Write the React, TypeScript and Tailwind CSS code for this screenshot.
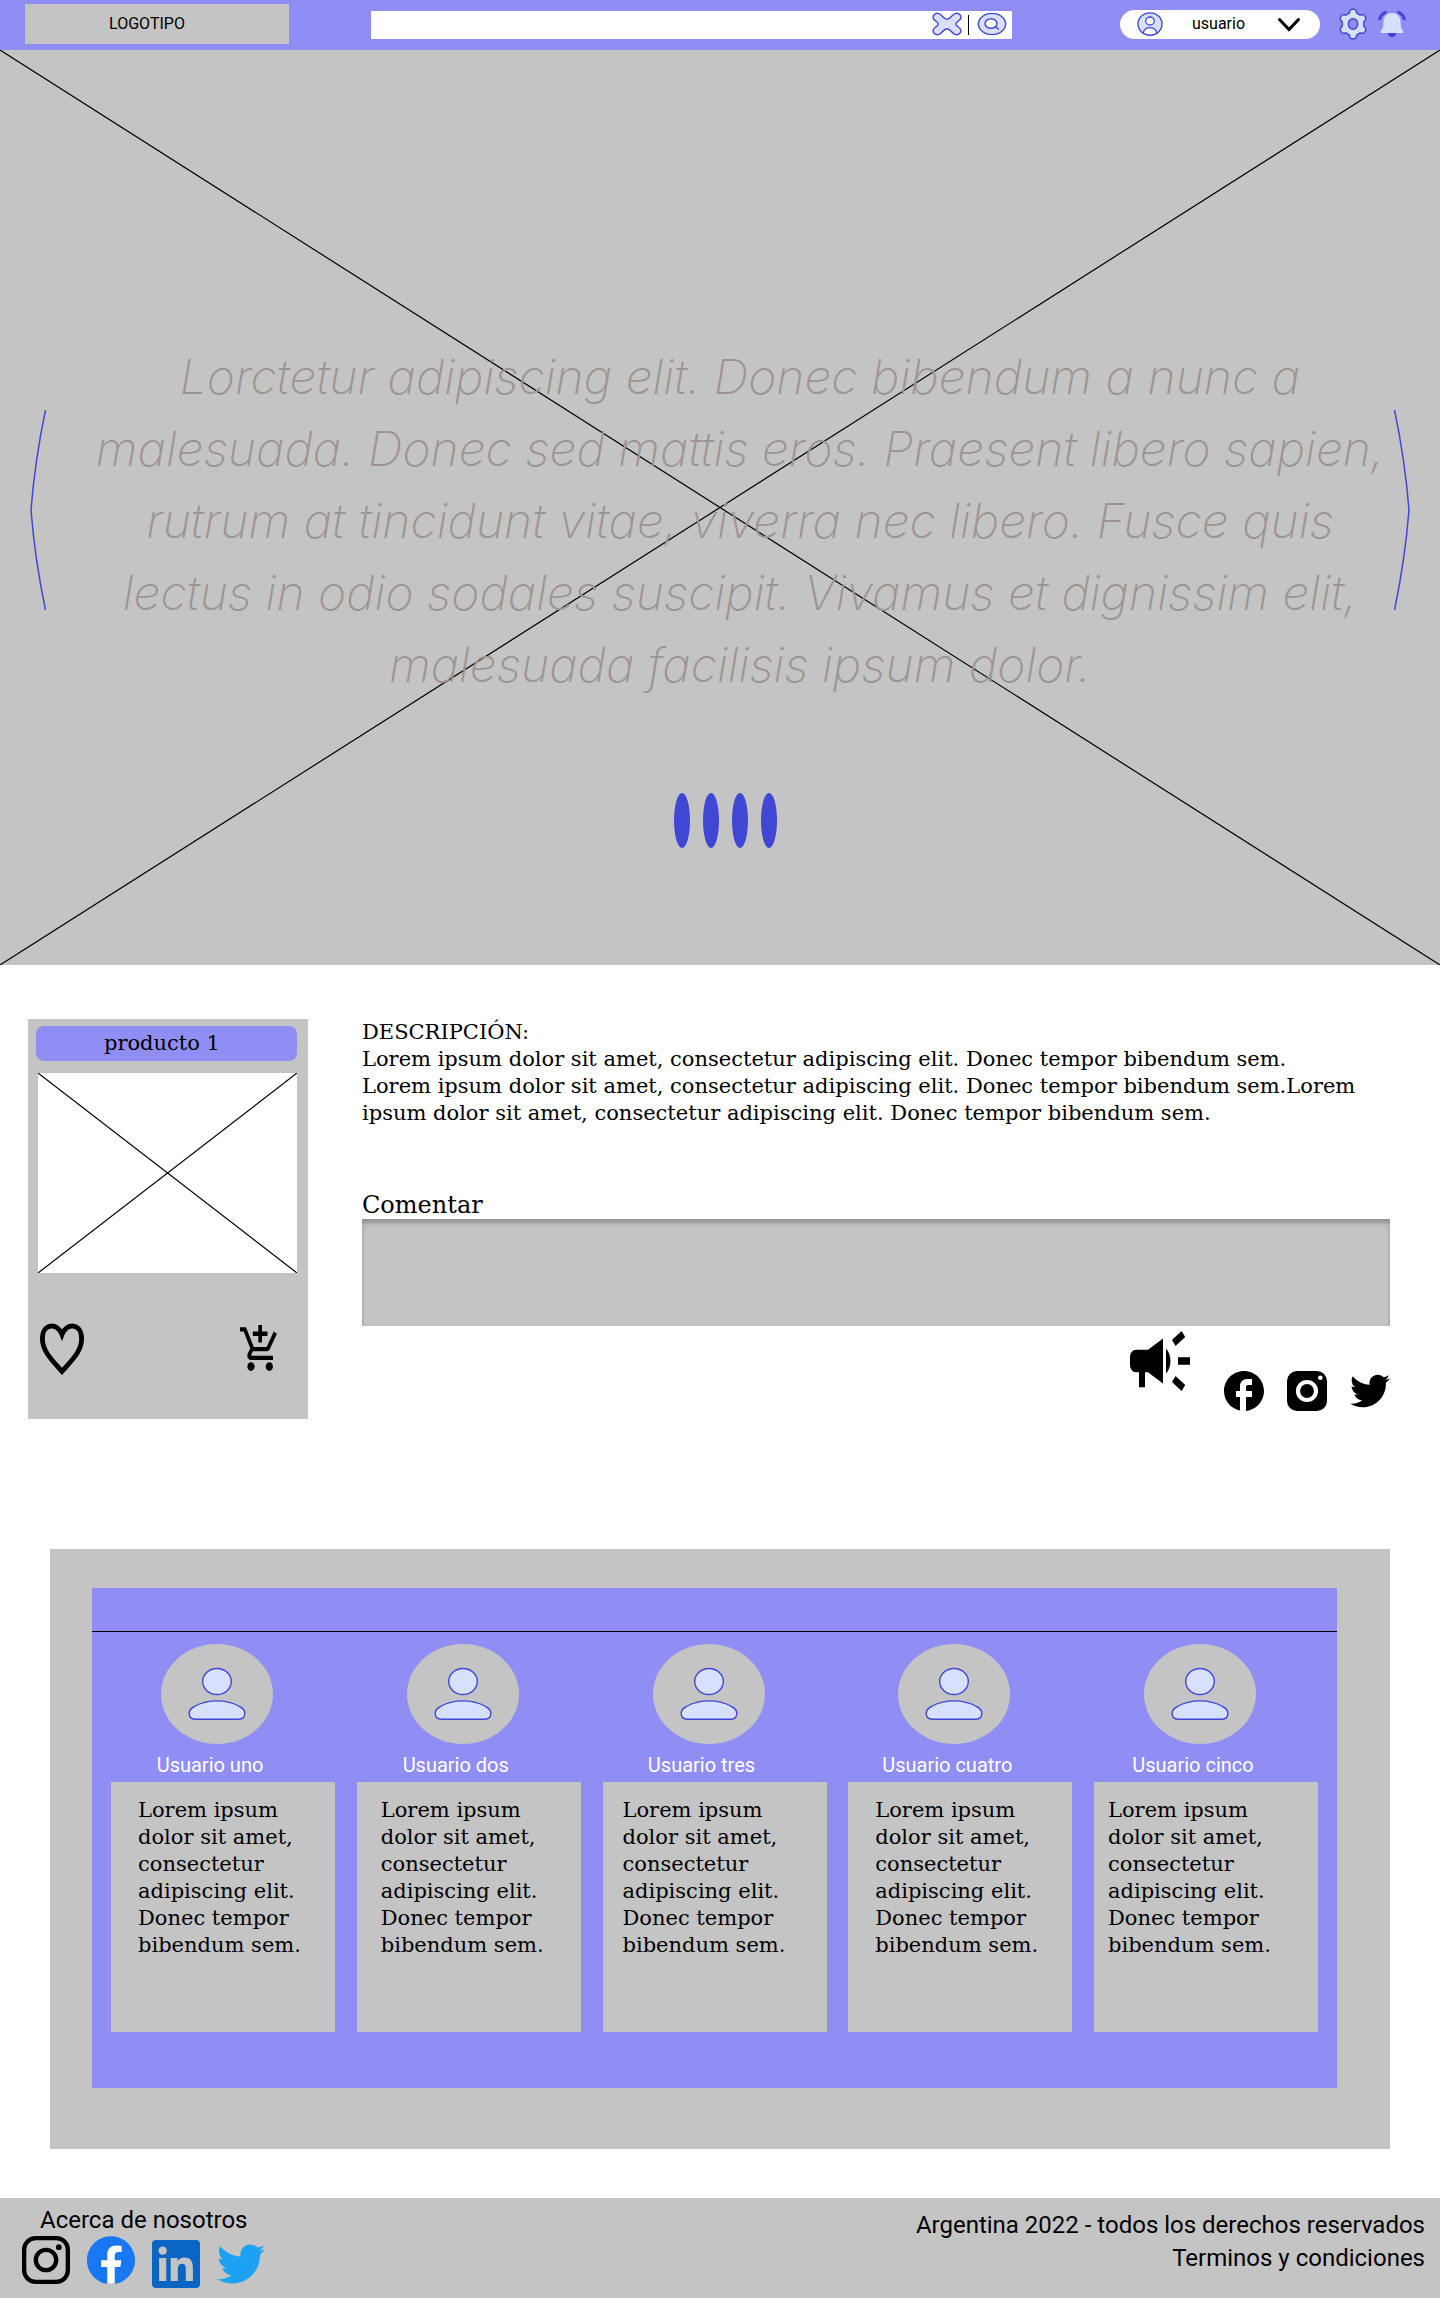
import React from "react";
import { FaTwitter } from "react-icons/fa";
import { MdFacebook } from "react-icons/md";

const SLAB = "font-['DejaVu_Serif',serif] text-[21px] leading-[27px]";

function Cross() {
  return (
    <svg className="absolute inset-0 h-full w-full" viewBox="0 0 100 100" preserveAspectRatio="none" aria-hidden="true">
      <path d="M0 0L100 100M100 0L0 100" stroke="#000" strokeWidth="1.2" fill="none" vectorEffect="non-scaling-stroke" />
    </svg>
  );
}

function ClearIcon() {
  return (
    <svg className="h-6 w-[30px]" viewBox="-0.5 -0.5 30 24" fill="#D7E0FF" stroke="#4147D5" strokeWidth="1.4" aria-hidden="true">
      <path d="M14.5 6.8C18 6.800 19 2.500 22.500 1.100C26.500 -0.200 29.800 3.800 27.800 6.600C26.800 8.300 23.300 9.500 23.300 11.500C23.300 13.500 26.800 14.700 27.800 16.400C29.800 19.200 26.500 23.200 22.500 21.900C19 20.500 18 16.200 14.500 16.200C11 16.200 10 20.500 6.500 21.900C2.500 23.200 -0.800 19.200 1.200 16.400C2.200 14.700 5.700 13.500 5.700 11.500C5.700 9.500 2.200 8.300 1.200 6.600C-0.800 3.800 2.500 -0.200 6.500 1.100C10 2.500 11 6.800 14.500 6.800Z" />
    </svg>
  );
}

function SearchIcon() {
  return (
    <svg className="h-6 w-[30px]" viewBox="0 0 30 24" stroke="#4147D5" strokeWidth="1.4" strokeLinecap="round" aria-hidden="true">
      <ellipse cx="15" cy="12" rx="13.6" ry="10.6" fill="#D7E0FF" />
      <ellipse cx="14" cy="11.5" rx="6" ry="4.8" fill="#fff" />
      <path d="M18.5 14.8L21.5 17.2" fill="none" />
    </svg>
  );
}

function AccountIcon() {
  return (
    <svg className="h-6 w-[26px] shrink-0" viewBox="0 0 26 24" stroke="#4147D5" strokeWidth="1.3" aria-hidden="true">
      <ellipse cx="13" cy="12" rx="12" ry="11.2" fill="#D7E0FF" />
      <ellipse cx="13" cy="9" rx="4.3" ry="4" fill="#fff" />
      <path d="M6 21C7.2 17.4 10 15.6 13 15.6S18.8 17.4 20 21C16 23.7 10 23.7 6 21Z" fill="#fff" />
    </svg>
  );
}

function GearIcon() {
  return (
    <svg className="h-8 w-[30px]" viewBox="0 0 14 14" preserveAspectRatio="none" stroke="#4147D5" strokeWidth="0.65" strokeLinejoin="round" aria-hidden="true">
      <path
        fill="#D7E0FF"
        d="m5.23 2.25l.43-1.11A1 1 0 0 1 6.59.5h.82a1 1 0 0 1 .93.64l.43 1.11l1.46.84l1.18-.18a1 1 0 0 1 1 .49l.4.7a1 1 0 0 1-.08 1.13l-.73.93v1.68l.75.93a1 1 0 0 1 .08 1.13l-.4.7a1 1 0 0 1-1 .49l-1.18-.18l-1.46.84l-.43 1.11a1 1 0 0 1-.93.64h-.84a1 1 0 0 1-.93-.64l-.43-1.11l-1.46-.84l-1.18.18a1 1 0 0 1-1-.49l-.4-.7a1 1 0 0 1 .08-1.13L2 7.84V6.16l-.75-.93a1 1 0 0 1-.08-1.13l.4-.7a1 1 0 0 1 1-.49l1.18.18Z"
      />
      <ellipse cx="7" cy="7" rx="2.2" ry="2.3" fill="#908DF4" />
    </svg>
  );
}

function BellIcon() {
  return (
    <svg className="h-7 w-7" viewBox="0 0 28 28" aria-hidden="true">
      <path d="M1.600 10C2 6.500 4.500 3.200 8.500 1.800M26.400 10C26 6.500 23.500 3.200 19.500 1.800" stroke="#4147D5" strokeWidth="3" fill="none" />
      <path d="M9.500 22.500A4.500 4.700 0 0 0 18.500 22.500Z" fill="#4147D5" />
      <path d="M14 3C8.200 3 5.400 7.200 5.400 11.500C5.400 17 4.400 19.300 3 21C2.300 22.300 3 23 4.200 23H23.800C25 23 25.700 22.300 25 21C23.600 19.300 22.600 17 22.600 11.500C22.600 7.200 19.800 3 14 3Z" fill="#D7E0FF" />
    </svg>
  );
}

function PersonIcon() {
  return (
    <svg className="h-[54px] w-[58px]" viewBox="0 0 58 54" fill="#D7E0FF" stroke="#4147D5" strokeWidth="1.4" aria-hidden="true">
      <ellipse cx="29" cy="14.500" rx="14.300" ry="13" />
      <path d="M6.500 39.500C19 32 39 32 51.500 39.500C59.500 43.500 58 52.300 50 52.300H8C0 52.300 -1.500 43.500 6.500 39.500Z" />
    </svg>
  );
}

function InstagramSolid() {
  return (
    <svg className="h-10 w-10" viewBox="0 0 40 40" aria-hidden="true">
      <rect width="40" height="40" rx="10" />
      <circle cx="20" cy="20" r="9" fill="none" stroke="#fff" strokeWidth="4.200" />
      <circle cx="33.300" cy="6.700" r="2.300" fill="#fff" />
    </svg>
  );
}

function InstagramOutline() {
  return (
    <svg className="h-12 w-12" viewBox="0 0 48 48" fill="none" stroke="#000" strokeWidth="4.300" aria-hidden="true">
      <rect x="2.150" y="2.150" width="43.700" height="43.700" rx="11.500" />
      <circle cx="24" cy="24" r="10.200" />
      <circle cx="36.800" cy="11.200" r="2.900" fill="#000" stroke="none" />
    </svg>
  );
}

const users = [
  { name: "Usuario uno", pad: "pl-[27px]" },
  { name: "Usuario dos", pad: "pl-6" },
  { name: "Usuario tres", pad: "pl-5" },
  { name: "Usuario cuatro", pad: "pl-[27px]" },
  { name: "Usuario cinco", pad: "pl-3.5" },
];

function Header() {
  return (
    <header className="flex h-[50px] items-center bg-[#908DF4] pr-[34px] pb-0.5 pl-[25px]">
      <a href="#" className="flex h-10 w-[264px] shrink-0 items-center justify-center bg-[#C4C4C4] pr-5 text-base">
        LOGOTIPO
      </a>
      <form className="mt-0.5 ml-[82px] flex h-7 min-w-0 flex-1 items-center bg-white pr-[5px]" onSubmit={(e) => e.preventDefault()}>
        <input type="text" aria-label="Buscar" className="h-full min-w-0 flex-1 px-3 text-base outline-none" />
        <button type="reset" aria-label="Borrar" className="pb-0.5">
          <ClearIcon />
        </button>
        <span className="mr-[8px] ml-[6px] h-5 w-px bg-black" />
        <button type="submit" aria-label="Buscar" className="pb-0.5">
          <SearchIcon />
        </button>
      </form>
      <div className="ml-[108px] flex h-[29px] w-[200px] shrink-0 items-center rounded-full bg-white pr-[19px] pl-[17px]">
        <AccountIcon />
        <select aria-label="Cuenta" className="ml-[29px] min-w-0 flex-1 appearance-none bg-transparent text-base outline-none">
          <option>usuario</option>
        </select>
        <svg className="h-[15px] w-6 shrink-0" viewBox="0 0 24 15" fill="none" stroke="#000" strokeWidth="3" strokeLinecap="round" aria-hidden="true">
          <path d="M2.500 2.500L12 12.500L21.500 2.500" />
        </svg>
      </div>
      <button type="button" aria-label="Configuración" className="ml-[18px]">
        <GearIcon />
      </button>
      <button type="button" aria-label="Notificaciones" className="ml-[10px]">
        <BellIcon />
      </button>
    </header>
  );
}

function Hero() {
  return (
    <section className="relative bg-[#C4C4C4] pt-[291px] pb-[117px]">
      <Cross />
      <div className="relative flex items-start px-[30px]">
        <button type="button" aria-label="Anterior" className="mt-[69px] shrink-0">
          <svg className="h-[200px] w-4" viewBox="0 0 16 200" fill="none" stroke="#4147D5" strokeWidth="1.500" aria-hidden="true">
            <path d="M15.500 0Q5 50 1 100Q5 150 15.500 200" />
          </svg>
        </button>
        <p className="min-w-0 flex-1 pl-10 text-center font-['Inter',sans-serif] text-5xl leading-[72px] font-extralight text-[#9F9492] [font-style:oblique_10deg]">
          Lorctetur adipiscing elit. Donec bibendum a nunc a malesuada. Donec sed mattis eros. Praesent libero sapien, rutrum at
          tincidunt vitae, viverra nec libero. Fusce quis lectus in odio sodales suscipit. Vivamus et dignissim elit, malesuada
          facilisis ipsum dolor.
        </p>
        <button type="button" aria-label="Siguiente" className="mt-[69px] shrink-0">
          <svg className="h-[200px] w-4" viewBox="0 0 16 200" fill="none" stroke="#4147D5" strokeWidth="1.500" aria-hidden="true">
            <path d="M0.500 0Q11 50 15 100Q11 150 0.500 200" />
          </svg>
        </button>
      </div>
      <div className="relative mt-[92px] flex justify-center gap-[13px] pl-[10px]">
        {[1, 2, 3, 4].map((n) => (
          <button key={n} type="button" aria-label={`Ir a la imagen ${n}`} className="h-[55px] w-4 rounded-[50%] bg-[#4147D5]" />
        ))}
      </div>
    </section>
  );
}

function ProductCard() {
  return (
    <article className="h-[400px] w-[280px] shrink-0 bg-[#C4C4C4] pt-[7px] pr-[11px] pl-2">
      <h2 className={`rounded-lg bg-[#908DF4] py-1 pr-[9px] text-center ${SLAB}`}>producto 1</h2>
      <div className="relative mt-3 ml-0.5 h-[200px] bg-white">
        <Cross />
      </div>
      <div className="mt-[50px] flex items-start justify-between pr-[20px] pl-1">
        <button type="button" aria-label="Me gusta">
          <svg className="h-[52px] w-11" viewBox="0 0 44 52" fill="none" stroke="#000" strokeWidth="4.800" aria-hidden="true">
            <path d="M22 11.500C17.500 -0.500 2.400 -0.500 2.400 16C2.400 28 12 37 22 48.500C32 37 41.600 28 41.600 16C41.600 -0.500 26.500 -0.500 22 11.500Z" />
          </svg>
        </button>
        <button type="button" aria-label="Agregar al carrito" className="mt-0.5">
          <svg className="h-[46px] w-[37px]" viewBox="1 1 20.200 21" preserveAspectRatio="none" aria-hidden="true">
            <path d="M11 9h2V6h3V4h-3V1h-2v3H8v2h3v3zm-4 9c-1.100 0-1.990.9-1.990 2S5.900 22 7 22s2-.9 2-2-.9-2-2-2zm10 0c-1.100 0-1.990.9-1.990 2s.89 2 1.990 2 2-.9 2-2-.9-2-2-2zm-9.830-3.250l.03-.12.9-1.630h7.450c.75 0 1.410-.41 1.750-1.030l3.860-7.010L19.420 4h-.01l-1.100 2-2.760 5H8.530l-.13-.27L6.160 6l-.95-2-.94-2H1v2h2l3.600 7.590-1.350 2.450c-.16.28-.25.61-.25.96 0 1.100.9 2 2 2h12v-2H7.420c-.13 0-.25-.11-.25-.25z" />
          </svg>
        </button>
      </div>
    </article>
  );
}

function Product() {
  return (
    <section className="flex pt-[54px] pr-[50px] pl-7">
      <ProductCard />
      <div className="ml-[54px] min-w-0 flex-1">
        <div className={SLAB}>
          <h3>DESCRIPCIÓN:</h3>
          <p>Lorem ipsum dolor sit amet, consectetur adipiscing elit. Donec tempor bibendum sem.</p>
          <p>
            Lorem ipsum dolor sit amet, consectetur adipiscing elit. Donec tempor bibendum sem.Lorem ipsum dolor sit amet,
            consectetur adipiscing elit. Donec tempor bibendum sem.
          </p>
        </div>
        <label htmlFor="comment" className="mt-16 block font-['DejaVu_Serif',serif] text-2xl leading-7">
          Comentar
        </label>
        <textarea
          id="comment"
          className="block h-[107px] w-full resize-none bg-[#C4C4C4] p-3 text-base shadow-[inset_0_4px_4px_rgba(0,0,0,0.250)] outline-none"
        />
        <div className="mt-[5px] flex items-start justify-end">
          <a href="#" aria-label="Anunciar" className="mr-[34px]">
            <svg className="h-[60px] w-[60px]" viewBox="2 4 20 16" preserveAspectRatio="none" aria-hidden="true">
              <path d="M18 11v2h4v-2h-4zM16 17.610c.96.71 2.210 1.650 3.200 2.390.4-.53.8-1.070 1.200-1.600-.99-.74-2.240-1.680-3.200-2.400-.4.54-.8 1.080-1.200 1.610zM20.400 5.600c-.4-.53-.8-1.070-1.200-1.600-.99.74-2.240 1.680-3.200 2.400.4.53.8 1.070 1.200 1.600.96-.72 2.210-1.650 3.200-2.400zM4 9c-1.100 0-2 .9-2 2v2c0 1.100.9 2 2 2h1v4h2v-4h1l5 3V6L8 9H4zM15.500 12c0-1.330-.58-2.530-1.500-3.350v6.690c.92-.81 1.500-2.010 1.500-3.340z" />
            </svg>
          </a>
          <div className="mt-10 flex gap-[23px]">
            <a href="#" aria-label="Facebook">
              <MdFacebook className="h-10 w-10" viewBox="2 2 20 20" />
            </a>
            <a href="#" aria-label="Instagram">
              <InstagramSolid />
            </a>
            <a href="#" aria-label="Twitter">
              <FaTwitter className="h-10 w-10" />
            </a>
          </div>
        </div>
      </div>
    </section>
  );
}

function Users() {
  return (
    <section className="mx-[50px] mt-[130px] bg-[#C4C4C4] pt-[39px] pr-[53px] pb-[61px] pl-[42px]">
      <div className="bg-[#908DF4] pt-[43px] pb-14">
        <hr className="border-t border-black" />
        <ul className="flex justify-between gap-3 px-[19px] pt-3">
          {users.map((u) => (
            <li key={u.name} className="w-56">
              <div className="flex justify-center pr-3">
                <div className="flex h-[100px] w-28 items-center justify-center rounded-[50%] bg-[#C4C4C4]">
                  <PersonIcon />
                </div>
              </div>
              <h3 className="mt-1.5 pr-[26px] pb-0.5 text-center text-xl leading-[30px] text-white">{u.name}</h3>
              <div className={`h-[250px] bg-[#C4C4C4] pt-[15px] pr-4 ${u.pad} ${SLAB}`}>
                Lorem ipsum
                <br />
                dolor sit amet,
                <br />
                consectetur
                <br />
                adipiscing elit.
                <br />
                Donec tempor
                <br />
                bibendum sem.
              </div>
            </li>
          ))}
        </ul>
      </div>
    </section>
  );
}

function Footer() {
  return (
    <footer className="mt-[49px] flex h-[100px] justify-between bg-[#C4C4C4] pr-[15px] pl-[22px] text-2xl">
      <div className="pt-2">
        <h3 className="pb-0.5 pl-[18px] leading-7">Acerca de nosotros</h3>
        <div className="flex items-start gap-[17px]">
          <a href="#" aria-label="Instagram">
            <InstagramOutline />
          </a>
          <a href="#" aria-label="Facebook">
            <svg className="h-12 w-12" viewBox="0 0 24 24" aria-hidden="true">
              <circle cx="12" cy="12" r="11.700" fill="#fff" />
              <path
                fill="#1877F2"
                d="M24 12.073c0-6.627-5.373-12-12-12s-12 5.373-12 12c0 5.990 4.388 10.954 10.125 11.854v-8.385H7.078v-3.470h3.047V9.430c0-3.007 1.792-4.669 4.533-4.669 1.312 0 2.686.235 2.686.235v2.953H15.830c-1.491 0-1.956.925-1.956 1.874v2.250h3.328l-.532 3.470h-2.796v8.385C19.612 23.027 24 18.062 24 12.073z"
              />
            </svg>
          </a>
          <a href="#" aria-label="LinkedIn" className="mt-1">
            <svg className="h-12 w-12" viewBox="0 0 24 24" fill="#0A66C2" aria-hidden="true">
              <path d="M20.447 20.452h-3.554v-5.569c0-1.328-.027-3.037-1.852-3.037-1.853 0-2.136 1.445-2.136 2.939v5.667H9.351V9h3.414v1.561h.046c.477-.9 1.637-1.850 3.370-1.850 3.601 0 4.267 2.370 4.267 5.455v6.286zM5.337 7.433c-1.144 0-2.063-.926-2.063-2.065 0-1.138.92-2.063 2.063-2.063 1.140 0 2.064.925 2.064 2.063 0 1.139-.925 2.065-2.064 2.065zm1.782 13.019H3.555V9h3.564v11.452zM22.225 0H1.771C.792 0 0 .774 0 1.729v20.542C0 23.227.792 24 1.771 24h20.451C23.200 24 24 23.227 24 22.271V1.729C24 .774 23.200 0 22.222 0h.003z" />
            </svg>
          </a>
          <a href="#" aria-label="Twitter" className="mt-1">
            <FaTwitter className="h-12 w-12 text-[#1DA1F2]" />
          </a>
        </div>
      </div>
      <div className="pt-[11px] text-right leading-[33px]">
        <p>Argentina 2022 - todos los derechos reservados</p>
        <p>
          <a href="#">Terminos y condiciones</a>
        </p>
      </div>
    </footer>
  );
}

export default function App() {
  return (
    <div className="bg-white pb-0.5 font-['Roboto',sans-serif] text-black">
      <Header />
      <main>
        <Hero />
        <Product />
        <Users />
      </main>
      <Footer />
    </div>
  );
}
